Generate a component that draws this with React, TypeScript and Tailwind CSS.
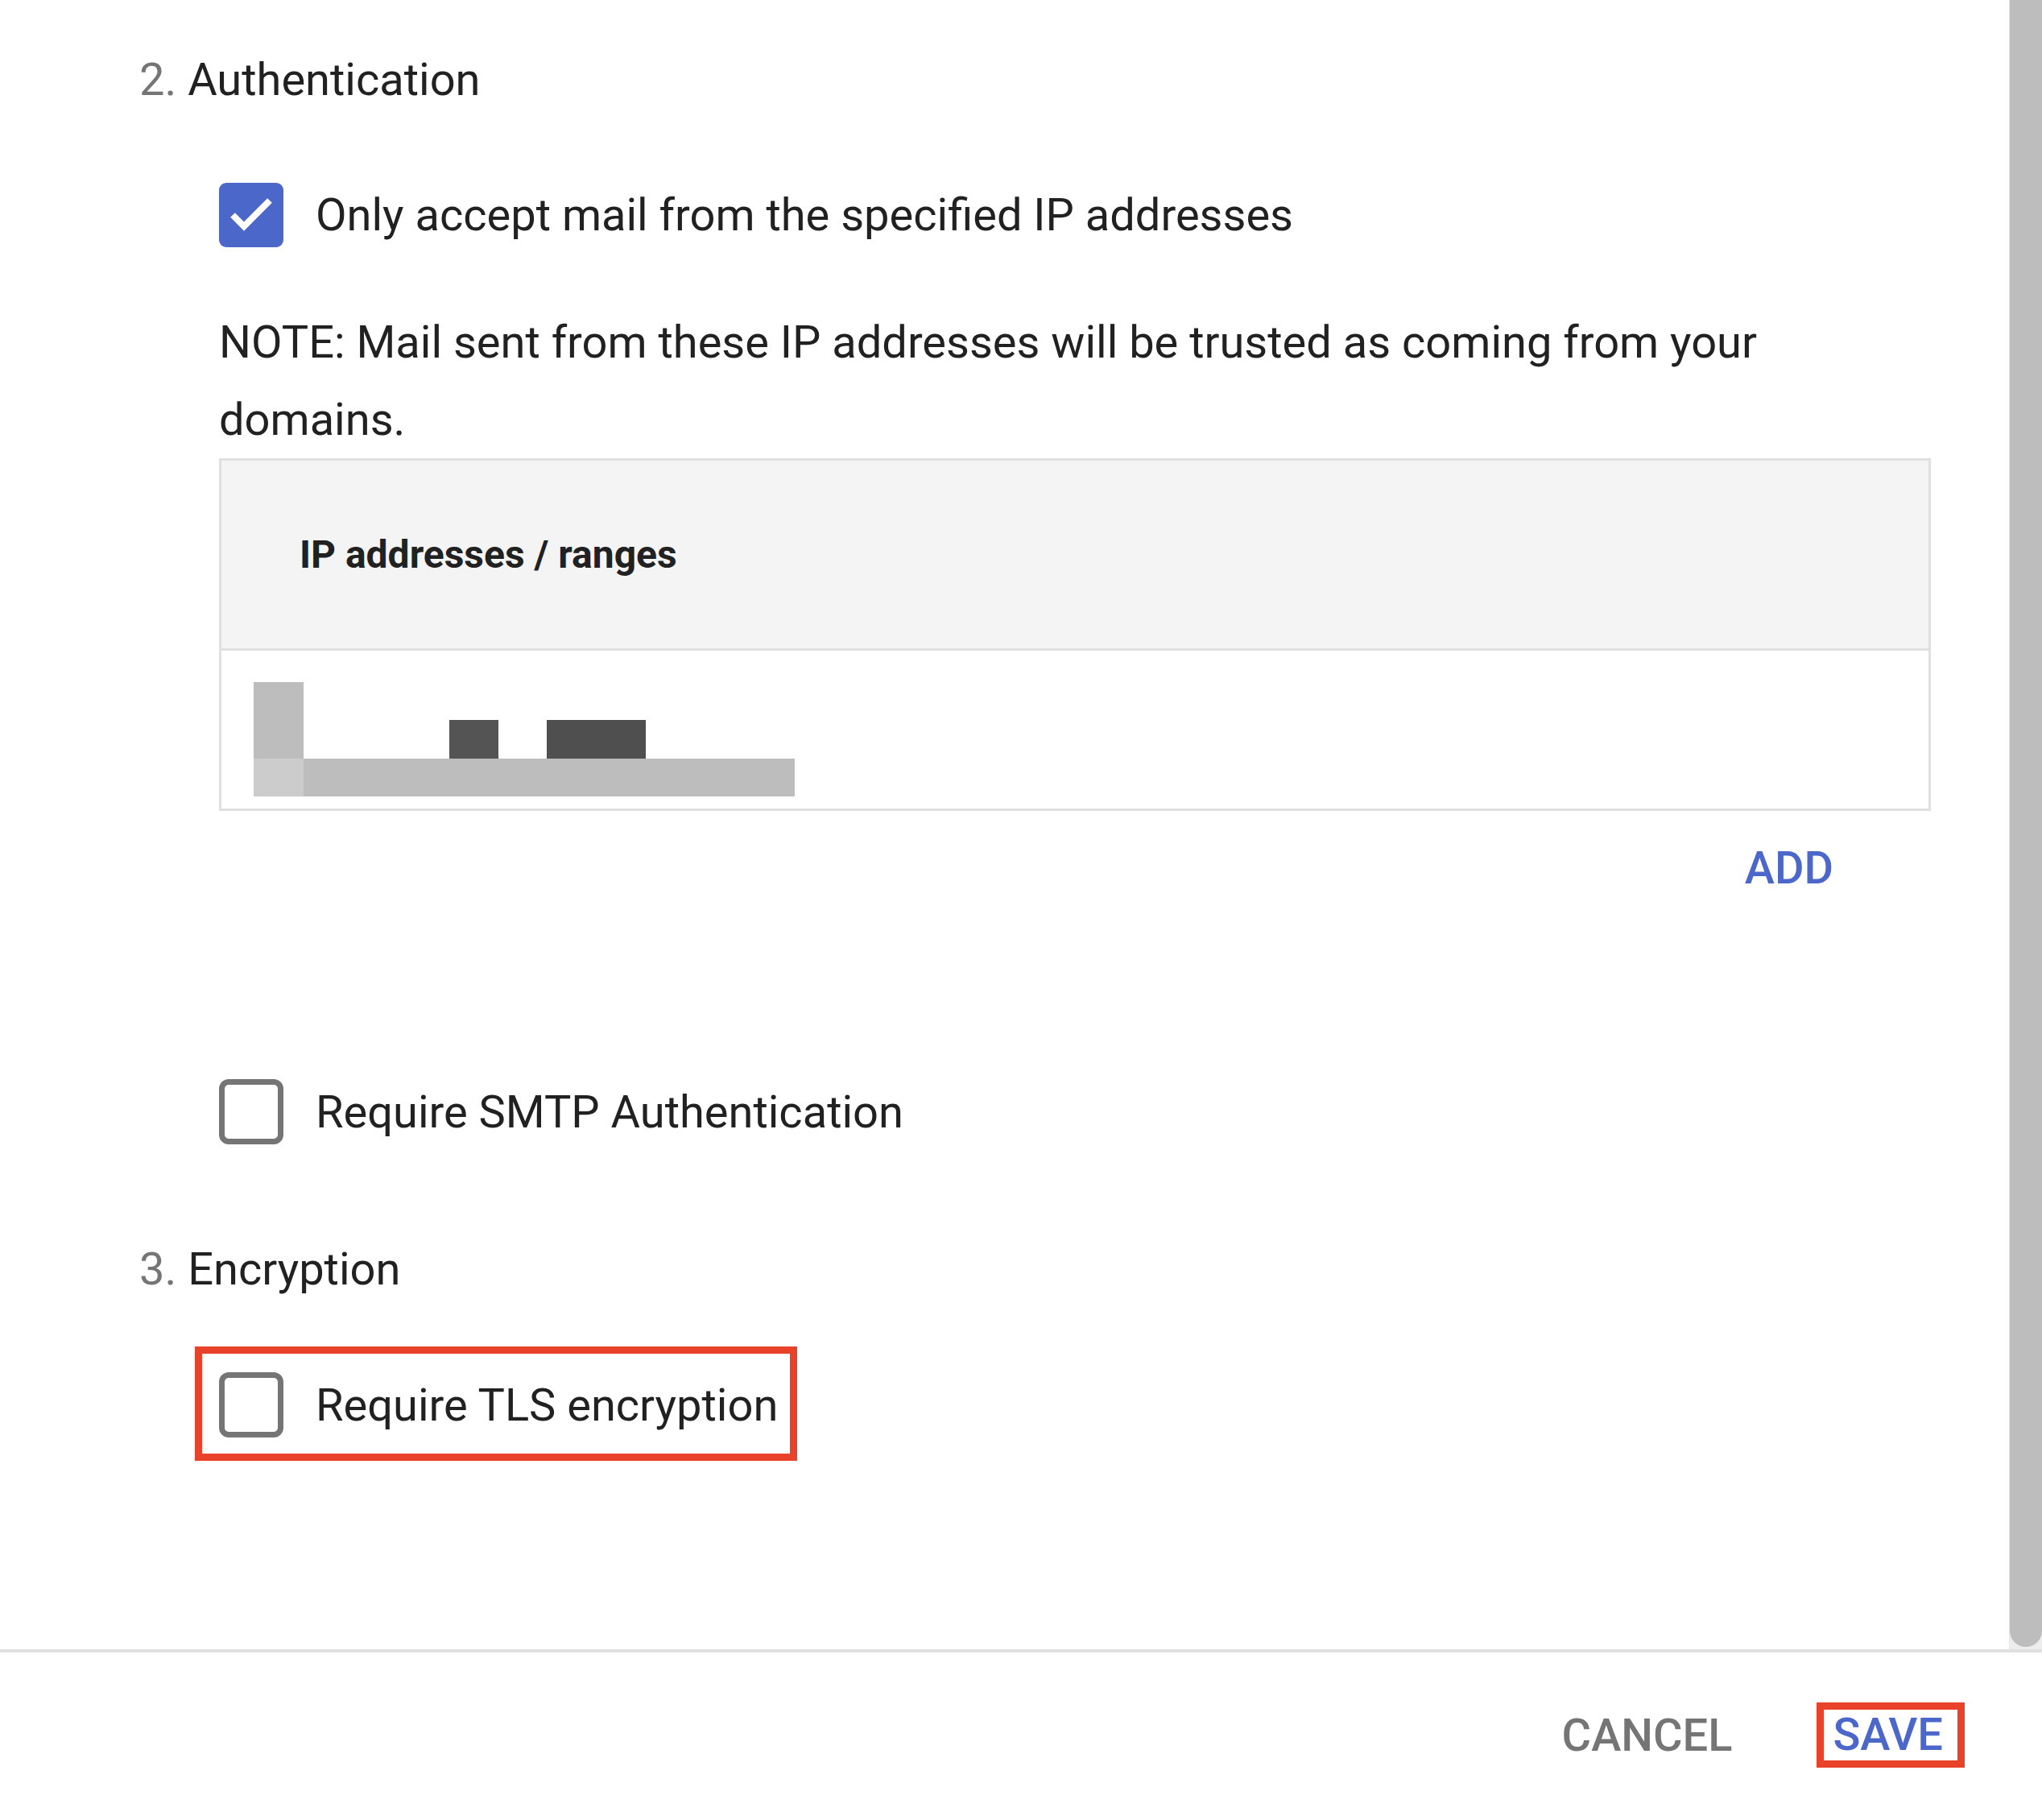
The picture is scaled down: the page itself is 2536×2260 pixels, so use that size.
import type { FC, ReactNode } from "react";

type CheckboxProps = {
    checked?: boolean;
    label: string;
};

const Checkbox: FC<CheckboxProps> = ({ checked, label }) => {
    return (
        <div className="flex items-center gap-[40px]">
            {checked ? (
                <div className="w-[80px] h-[80px] rounded-[9px] bg-[#4b67c9] flex items-center justify-center shrink-0">
                    <svg width="80" height="80" viewBox="0 0 80 80">
                        <polyline points="17,40 31,54 63,22" fill="none" stroke="#ffffff" strokeWidth="8" />
                    </svg>
                </div>
            ) : (
                <div className="w-[80px] h-[81px] rounded-[12px] border-[7px] border-[#757575] bg-white shrink-0" />
            )}
            <span className="text-[56px] leading-[64px] text-[#212121] whitespace-nowrap">{label}</span>
        </div>
    );
};

const SectionTitle: FC<{ num: string; children: ReactNode }> = ({ num, children }) => {
    return (
        <h2 className="text-[56px] leading-[64px] text-[#212121] font-normal">
            <span className="text-[#757575]">{num}</span> {children}
        </h2>
    );
};

const Redacted: FC = () => {
    return (
        <svg width="672" height="142" viewBox="0 0 672 142" className="block">
            <rect x="0" y="0" width="62" height="95" fill="#bdbdbd" />
            <rect x="0" y="95" width="62" height="47" fill="#cccccc" />
            <rect x="62" y="95" width="610" height="47" fill="#bdbdbd" />
            <rect x="243" y="47" width="61" height="48" fill="#545454" />
            <rect x="364" y="47" width="123" height="48" fill="#4f4f4f" />
        </svg>
    );
};

const App: FC = () => {
    return (
        <div className="w-[2536px] h-[2260px] bg-white flex flex-col font-[Roboto,'Liberation_Sans',sans-serif] overflow-hidden">
            <section className="flex h-[2048px]">
                <section className="flex-1 pl-[173px] pt-[67px]">
                    <SectionTitle num="2.">Authentication</SectionTitle>

                    <section className="ml-[99px] mr-[97px]">
                        <div className="mt-[96px]">
                            <Checkbox checked label="Only accept mail from the specified IP addresses" />
                        </div>

                        <p className="mt-[70px] text-[56px] leading-[96px] text-[#212121]">
                            NOTE: Mail sent from these IP addresses will be trusted as coming from your domains.
                        </p>

                        <div className="border-[3px] border-[#e0e0e0]">
                            <div className="h-[236px] bg-[#f4f4f4] border-b-[3px] border-[#e0e0e0] flex items-center pl-[97px]">
                                <span className="text-[48px] font-bold text-[#212121]">IP addresses / ranges</span>
                            </div>
                            <div className="h-[196px] pl-[40px] pt-[39px]">
                                <Redacted />
                            </div>
                        </div>

                        <div className="flex justify-end pr-[121px] mt-[39px]">
                            <button className="text-[56px] leading-[64px] font-medium text-[#4b67c9]">ADD</button>
                        </div>

                        <div className="mt-[230px]">
                            <Checkbox label="Require SMTP Authentication" />
                        </div>
                    </section>

                    <div className="mt-[123px]">
                        <SectionTitle num="3.">Encryption</SectionTitle>
                    </div>

                    <div className="mt-[64px] ml-[69px] inline-flex border-[9px] border-[#e8432a] pl-[21px] pt-[23px] pb-[20px] pr-[15px]">
                        <Checkbox label="Require TLS encryption" />
                    </div>
                </section>

                <div className="w-[41px] h-full border-l border-[#e6e6e6] bg-[#ededed]">
                    <div className="w-[40px] h-[2045px] bg-[#bdbdbd] rounded-b-[20px]" />
                </div>
            </section>

            <div className="h-[4px] bg-[#e0e0e0]" />

            <footer className="flex-1 flex items-start justify-end pr-[96px] pt-[62px]">
                <button className="h-[81px] flex items-center text-[56px] leading-[64px] font-medium text-[#757575]">CANCEL</button>
                <button className="ml-[105px] border-[9px] border-[#e8432a] pl-[11px] pr-[18px] h-[81px] flex items-center text-[56px] leading-[63px] font-medium text-[#4b67c9]">
                    SAVE
                </button>
            </footer>
        </div>
    );
};

export default App;
